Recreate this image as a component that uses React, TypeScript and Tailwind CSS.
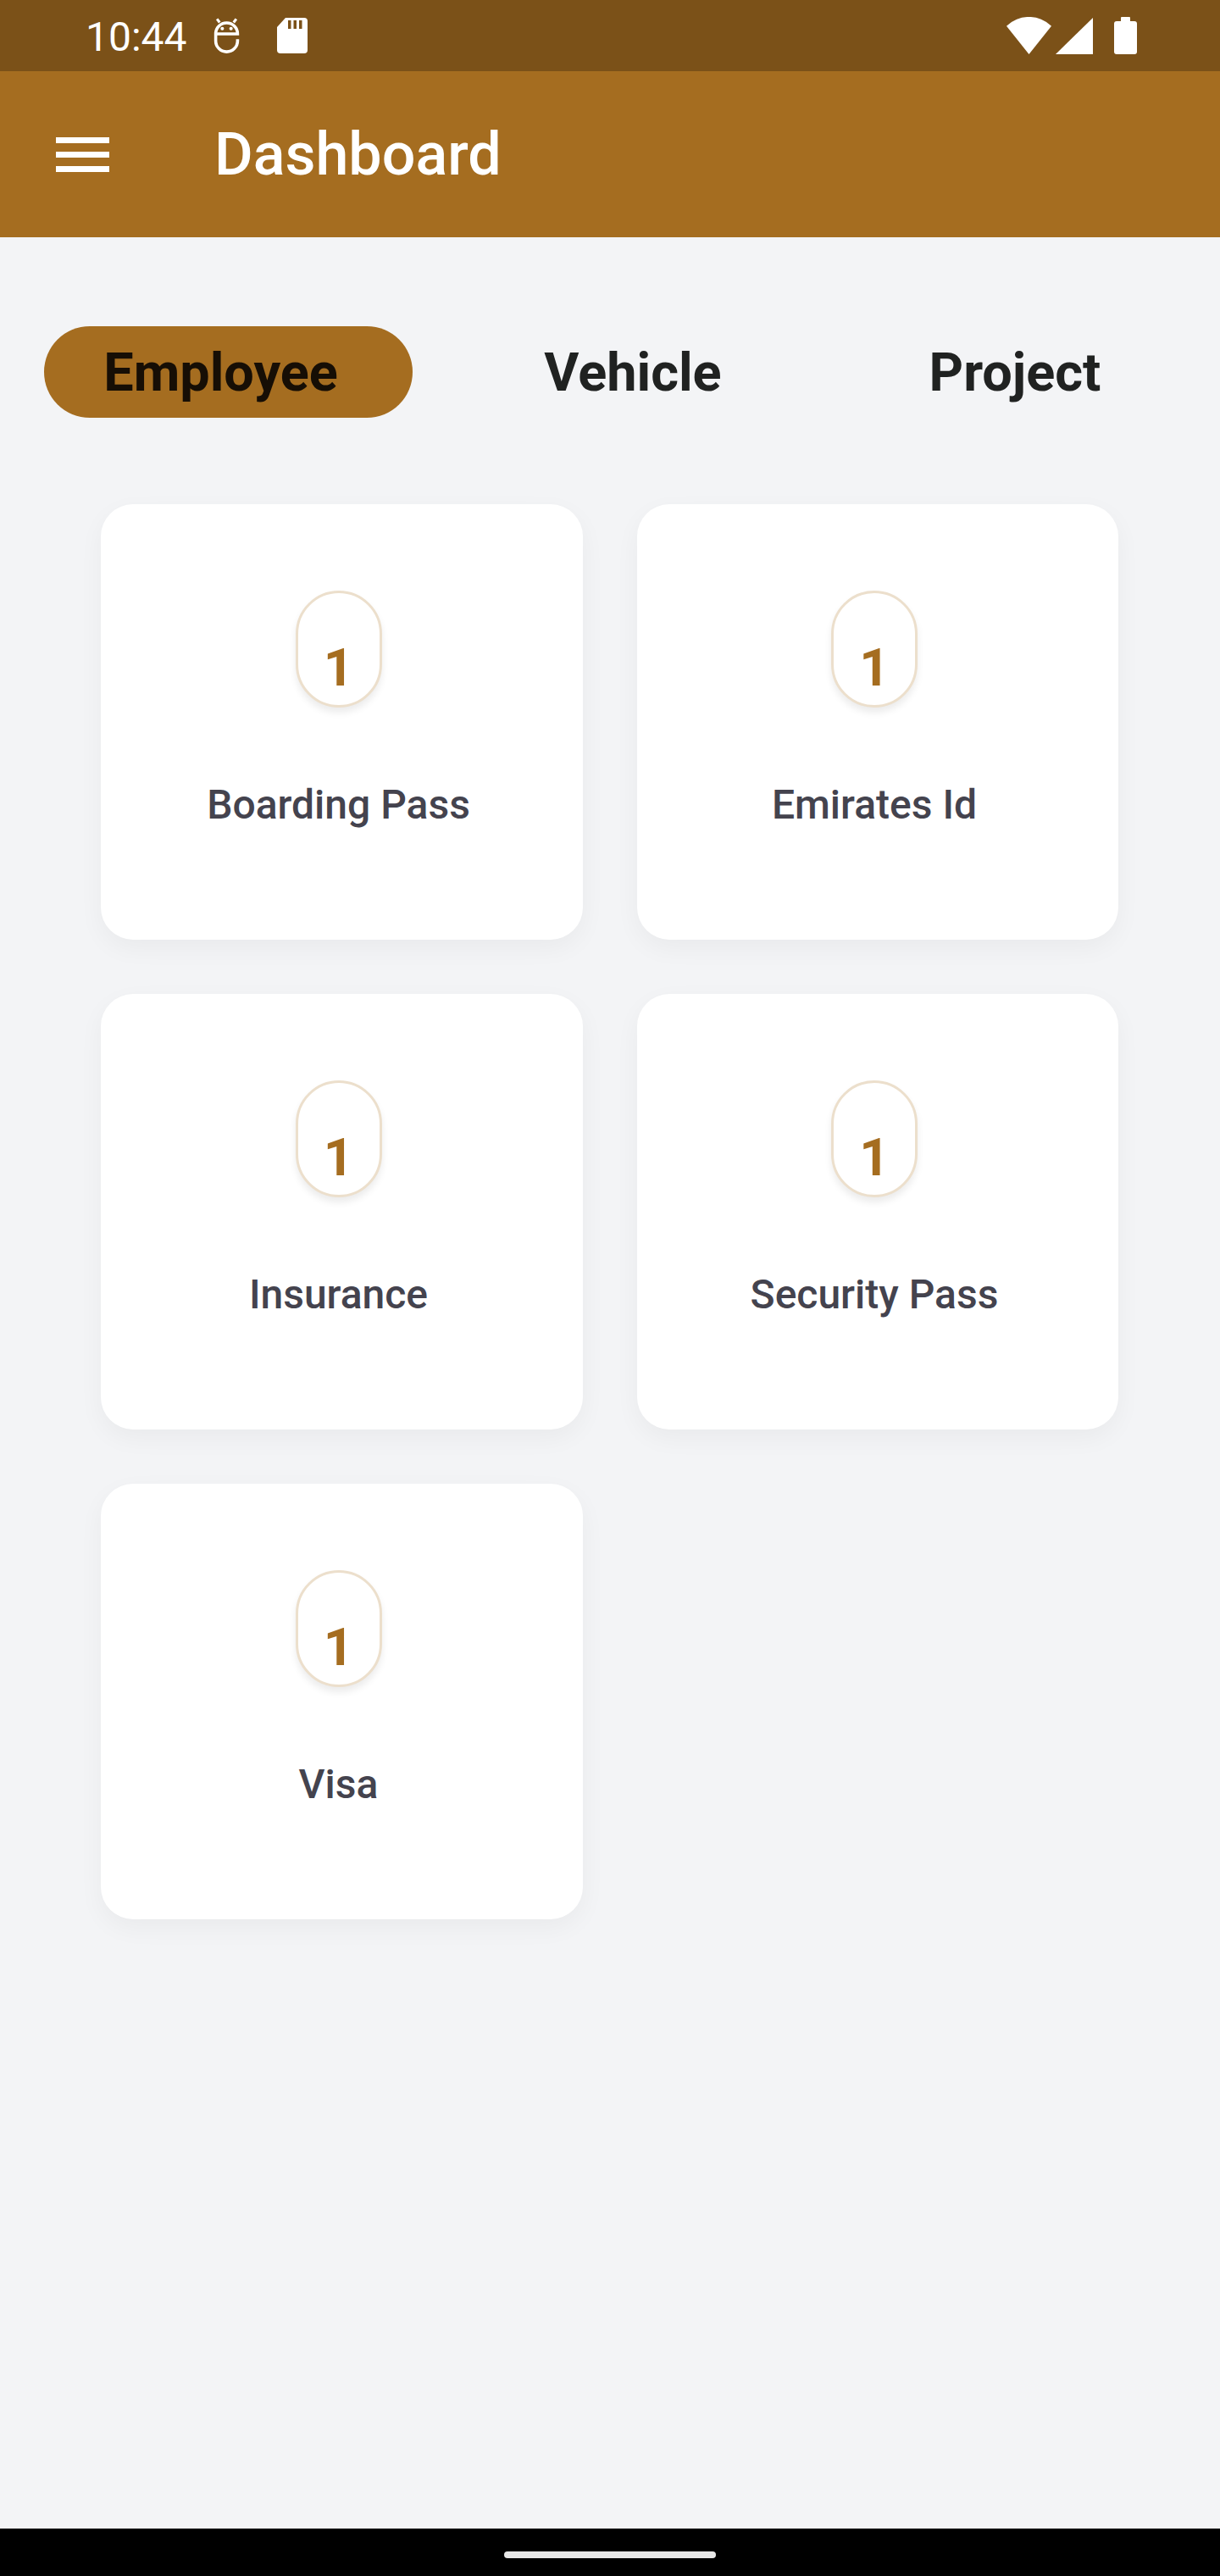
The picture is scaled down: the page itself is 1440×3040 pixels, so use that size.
const font = "font-['Roboto',_'Noto_Sans',_sans-serif]";

const cards = ["Boarding Pass", "Emirates Id", "Insurance", "Security Pass", "Visa"];

const StatusBar = () => (
  <div className="h-[84px] bg-[#7B5118] flex items-center pl-[101px] pr-[98px] text-white">
    <span className="text-[48px] leading-none mt-[4px]">10:44</span>
    <svg className="ml-[30px]" width="33" height="44" viewBox="0 0 32 42" fill="none">
      <path d="M3.5 19 A12.5 12.5 0 0 1 28.5 19 L3.5 19 L3.5 27 A12.5 12.5 0 0 0 28.5 27 L28.5 25" stroke="white" strokeWidth="3.5" />
      <path d="M5 2 L8 6 M27 2 L24 6" stroke="white" strokeWidth="3" />
      <circle cx="11" cy="13" r="2" fill="white" />
      <circle cx="21" cy="13" r="2" fill="white" />
    </svg>
    <svg className="ml-[43px]" width="36" height="42" viewBox="0 0 36 42">
      <path d="M10 0 H32 A4 4 0 0 1 36 4 V38 A4 4 0 0 1 32 42 H4 A4 4 0 0 1 0 38 V11 Z" fill="white" />
      <rect x="13" y="3" width="3.5" height="10" fill="#7B5118" />
      <rect x="19.5" y="3" width="3.5" height="10" fill="#7B5118" />
      <rect x="26" y="3" width="3.5" height="10" fill="#7B5118" />
    </svg>
    <div className="flex-1" />
    <svg width="53" height="44" viewBox="0 0 53 44">
      <path d="M26.5 44 L0 10.7 A38 38 0 0 1 53 10.7 Z" fill="white" />
    </svg>
    <svg className="ml-[5px]" width="44" height="43" viewBox="0 0 44 43">
      <path d="M44 0 V43 H0 Z" fill="white" />
    </svg>
    <svg className="ml-[25px]" width="27" height="44" viewBox="0 0 27 44">
      <rect x="8" y="0" width="11" height="8" rx="1" fill="white" />
      <rect x="0" y="5" width="27" height="39" rx="3" fill="white" />
    </svg>
  </div>
);

const AppBar = () => (
  <div className="h-[196px] bg-[#A56D20] flex items-center">
    <div className="ml-[66px] w-[63px] flex flex-col gap-[10px]">
      <div className="h-[7px] bg-white" />
      <div className="h-[7px] bg-white" />
      <div className="h-[7px] bg-white" />
    </div>
    <h1 className="ml-[124px] text-[70px] leading-none font-medium text-white">Dashboard</h1>
  </div>
);

const Tabs = () => (
  <div className="flex items-center pl-[52px] mt-[105px]">
    <div className="w-[435px] h-[108px] rounded-full bg-[#A56D20] flex items-center justify-center pr-[18px]">
      <span className="text-[63px] leading-none font-bold text-[#160e05]">Employee</span>
    </div>
    <div className="ml-[110px] w-[300px] flex justify-center">
      <span className="text-[63px] leading-none font-bold text-[#202221]">Vehicle</span>
    </div>
    <div className="ml-[151px] w-[300px] flex justify-center">
      <span className="text-[63px] leading-none font-bold text-[#202221]">Project</span>
    </div>
  </div>
);

const Card = ({ title }: { title: string }) => (
  <div className="h-[514px] bg-white rounded-[38px] shadow-[0_10px_30px_rgba(0,0,0,0.045)] flex flex-col items-center pt-[102px]">
    <div className="w-[102px] h-[138px] rounded-full border-[3px] border-[#ecdfcc] bg-white shadow-[0_6px_8px_rgba(0,0,0,0.08)] flex justify-center pt-[57px] -ml-[8px]">
      <span className="text-[62px] leading-none font-bold text-[#A56D20]">1</span>
    </div>
    <div className="mt-[91px] text-[48px] leading-none font-medium text-[#44434e] -ml-[8px]">{title}</div>
  </div>
);

export default function App() {
  return (
    <div className={`${font} w-[1440px] h-[3040px] flex flex-col bg-[#f3f4f6]`}>
      <StatusBar />
      <AppBar />
      <div className="flex-1">
        <Tabs />
        <div className="grid grid-cols-[569px_568px] gap-[64px] pl-[119px] mt-[102px]">
          {cards.map((c) => (
            <Card key={c} title={c} />
          ))}
        </div>
      </div>
      <div className="h-[56px] bg-black flex justify-center pt-[27px]">
        <div className="w-[250px] h-[8px] rounded-full bg-[#e8e8e8]" />
      </div>
    </div>
  );
}
